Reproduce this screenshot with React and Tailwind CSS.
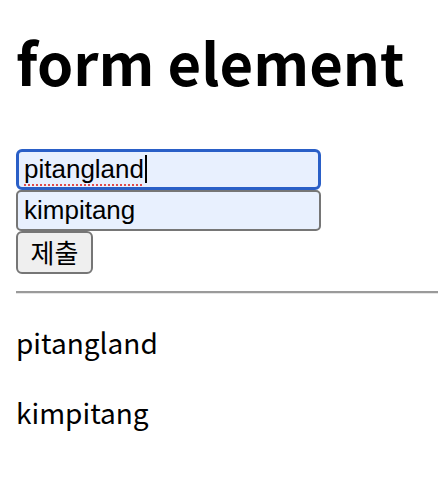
import React, { useState } from 'react';

const App = () => {
  const [id] = useState('pitangland');
  const [name, setName] = useState('kimpitang');

  return (
    <div className="min-h-[480px] overflow-hidden bg-white pl-4 pt-px text-black">
      {/* Title */}
      <h1 className="mt-[26px] mb-[52px] whitespace-nowrap text-[58px] font-bold leading-[1.2] [font-family:'Noto_Sans_CJK_KR','Noto_Sans',sans-serif]">
        form element
      </h1>

      {/* Form */}
      <form className="flex flex-col items-start" onSubmit={(e) => e.preventDefault()}>
        <div className="w-[305px] h-[41px] rounded-[6px] border-[3px] border-[#2a5fc7] bg-[#e8f0fe] px-[5px] flex items-center">
          <span className="text-[26px] leading-none [font-family:'Liberation_Sans',Arial,sans-serif] underline decoration-dotted decoration-[#e04b4b] decoration-2 underline-offset-[6px]">
            {id}
          </span>
          <span className="ml-[1px] h-[28px] w-[2px] bg-black" />
        </div>
        <input
          value={name}
          onChange={(e) => setName(e.target.value)}
          className="w-[305px] h-[41px] rounded-[5px] border-2 border-[#767676] bg-[#e8f0fe] px-[6px] text-[26px] outline-none [font-family:'Liberation_Sans',Arial,sans-serif]"
        />
        <button
          type="submit"
          className="h-[43px] w-[77px] rounded-[6px] border-2 border-[#767676] bg-[#efefef] text-[26px] leading-none [font-family:'Noto_Sans_CJK_KR',sans-serif]"
        >
          제출
        </button>
      </form>

      <hr className="mt-[17px] border-t-2 border-[#9a9a9a] border-b border-b-[#e6e6e6]" />

      {/* Values */}
      <div className="[font-family:'Noto_Sans_CJK_KR','Noto_Sans',sans-serif] text-[28px] leading-[1.2]">
        <p className="mt-[32px]">{id}</p>
        <p className="mt-[37px]">{name}</p>
      </div>
    </div>
  );
};

export default App;
